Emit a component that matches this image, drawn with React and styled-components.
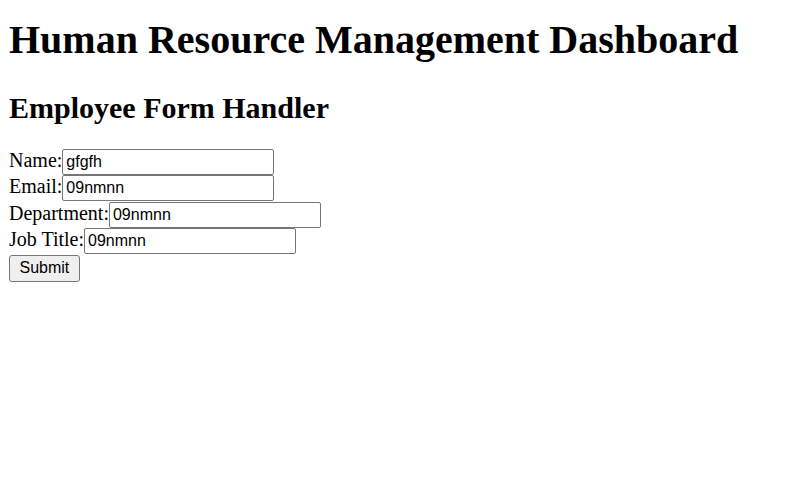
import React, { useState } from "react";
import styled, { createGlobalStyle } from "styled-components";

const GlobalStyle = createGlobalStyle`
  body {
    margin: 0 9px 9px;
    background: #fff;
    color: #000;
    font-family: "Liberation Serif", "Times New Roman", serif;
    font-size: 20px;
  }
`;

const Title = styled.h1`
  font-size: 40px;
  font-weight: bold;
  margin: 15.5px 0 0;
`;

const SubTitle = styled.h2`
  font-size: 30px;
  font-weight: bold;
  margin: 28px 0 24px;
`;

const Row = styled.div`
  display: block;
  height: 26.5px;
`;

const Input = styled.input`
  box-sizing: border-box;
  width: 212px;
  height: 26px;
  padding: 1px 3px;
  border: 1px solid #767676;
  border-radius: 2px;
  font-family: "Liberation Sans", Arial, sans-serif;
  font-size: 16px;
  color: #000;
  background: #fff;
`;

const Button = styled.button`
  box-sizing: border-box;
  height: 27px;
  padding: 0 9.5px;
  border: 1px solid #767676;
  border-radius: 3px;
  background-color: #efefef;
  font-family: "Liberation Sans", Arial, sans-serif;
  font-size: 16px;
  color: #000;
`;

function App() {
  const [employee, setEmployee] = useState({
    name: "gfgfh",
    email: "09nmnn",
    department: "09nmnn",
    jobTitle: "09nmnn",
  });

  const handleChange = (event) =>
    setEmployee({ ...employee, [event.target.name]: event.target.value });

  const handleSubmit = (event) => event.preventDefault();

  return (
    <>
      <GlobalStyle />
      <Title>Human Resource Management Dashboard</Title>
      <SubTitle>Employee Form Handler</SubTitle>
      <form onSubmit={handleSubmit}>
        <Row>
          <label>
            Name:
            <Input name="name" value={employee.name} onChange={handleChange} />
          </label>
        </Row>
        <Row>
          <label>
            Email:
            <Input name="email" value={employee.email} onChange={handleChange} />
          </label>
        </Row>
        <Row>
          <label>
            Department:
            <Input
              name="department"
              value={employee.department}
              onChange={handleChange}
            />
          </label>
        </Row>
        <Row>
          <label>
            Job Title:
            <Input
              name="jobTitle"
              value={employee.jobTitle}
              onChange={handleChange}
            />
          </label>
        </Row>
        <Button type="submit">Submit</Button>
      </form>
    </>
  );
}

export default App;
